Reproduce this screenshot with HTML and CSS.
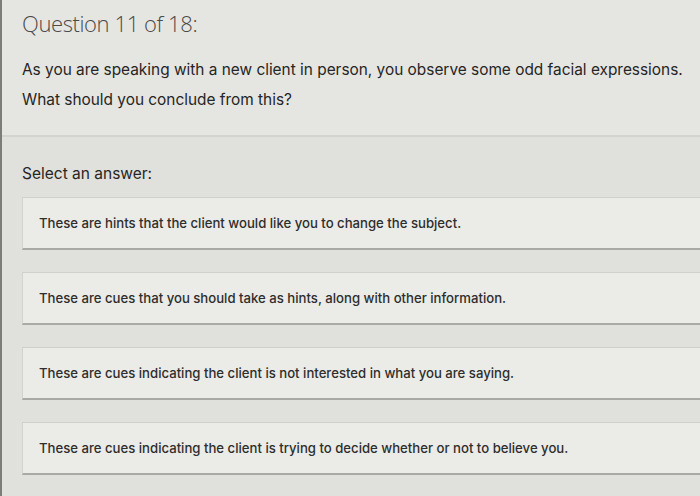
FILE: index.html
```html
<!DOCTYPE html>
<html>
<head>
<meta charset="utf-8">
<link rel="stylesheet" href="styles.css">
</head>
<body>
<div class="page">
  <header class="head">
    <h1 class="title">Question 11 of 18:</h1>
    <p class="question">As you are speaking with a new client in person, you observe some odd facial expressions.<br>What should you conclude from this?</p>
  </header>
  <main class="answers">
    <p class="select">Select an answer:</p>
    <ul class="options">
      <li class="option">These are hints that the client would like you to change the subject.</li>
      <li class="option">These are cues that you should take as hints, along with other information.</li>
      <li class="option">These are cues indicating the client is not interested in what you are saying.</li>
      <li class="option">These are cues indicating the client is trying to decide whether or not to believe you.</li>
    </ul>
  </main>
</div>
</body>
</html>
```

FILE: styles.css
```css
html, body {
  margin: 0;
  padding: 0;
}
body {
  width: 700px;
  height: 496px;
  overflow: hidden;
  background: #dededa;
  font-family: Inter, "Liberation Sans", Arial, sans-serif;
}
.page {
  height: 496px;
  border-left: 2px solid #7c7c78;
  box-sizing: border-box;
  display: flex;
  flex-direction: column;
}
.head {
  background: #e5e5e2;
  padding: 8px 0 0 20px;
  height: 127px;
  border-bottom: 2px solid #d3d3cf;
}
.title {
  margin: 0;
  font-family: "Open Sans", sans-serif;
  font-weight: 300;
  font-size: 22px;
  line-height: 30px;
  color: #4a4a48;
  letter-spacing: -0.4px;
}
.question {
  margin: 17px 0 0 0;
  font-size: 15.4px;
  line-height: 30px;
  color: #262624;
}
.answers {
  flex: 1;
  background: #e0e0dc;
  padding: 25px 0 0 20px;
}
.select {
  margin: 0;
  font-size: 15.5px;
  line-height: 24px;
  color: #262624;
}
.options {
  list-style: none;
  margin: 11px 0 0 0;
  padding: 0;
  display: flex;
  flex-direction: column;
  gap: 22px;
}
.option {
  height: 50px;
  margin-right: -20px;
  background: #ebebe8;
  border-top: 1px solid #cfcfcb;
  border-left: 1px solid #d2d2ce;
  border-bottom: 2px solid #a9a9a5;
  padding-left: 16px;
  display: flex;
  align-items: center;
  font-size: 13.15px;
  font-weight: 500;
  color: #2e2e2c;
}
```
